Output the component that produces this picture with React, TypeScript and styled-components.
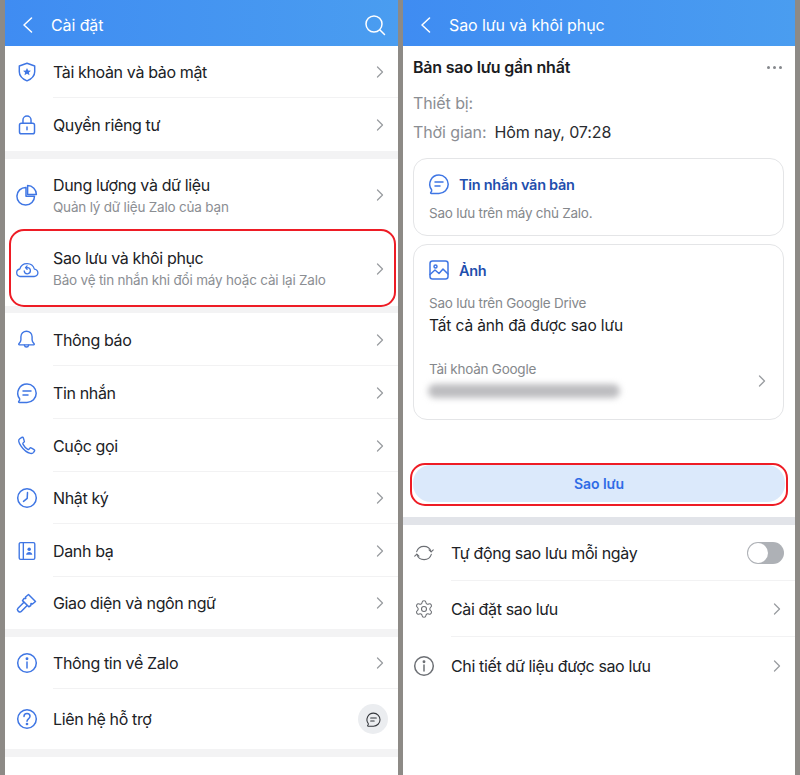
import React from "react";
import styled, { createGlobalStyle } from "styled-components";
import { Settings } from "lucide-react";

const Global = createGlobalStyle`
  html, body { margin: 0; padding: 0; background: #8d8a86; }
  * { box-sizing: border-box; }
`;

const Page = styled.div`
  width: 800px;
  height: 775px;
  overflow: hidden;
  padding: 0 5px;
  display: grid;
  grid-template-columns: 393px 392px;
  column-gap: 5px;
  background: #8d8a86;
  font-family: Inter, "Noto Sans", sans-serif;
  color: #1f2124;
`;

const Panel = styled.div`
  height: 775px;
  background: #fff;
  display: flex;
  flex-direction: column;
  overflow: hidden;
`;

const Header = styled.div`
  flex: none;
  height: 46px;
  display: flex;
  align-items: center;
  padding: 4px 12px 0 17px;
  background: linear-gradient(90deg, #3f8cf2 0%, #4a9df0 100%);
  color: #fff;
  font-size: 16px;
  gap: 18px;
`;

const HeaderTitle = styled.div<{ $grow?: boolean }>`
  flex: ${(p) => (p.$grow ? 1 : "none")};
  letter-spacing: -0.1px;
`;

const Band = styled.div<{ $h: number; $color?: string }>`
  flex: none;
  height: ${(p) => p.$h}px;
  background: ${(p) => p.$color ?? "#f3f3f4"};
`;

const Row = styled.div<{ $h: number; $inset?: number; $line?: boolean }>`
  position: relative;
  flex: none;
  height: ${(p) => p.$h}px;
  display: flex;
  align-items: center;
  padding-left: ${(p) => p.$inset ?? 12}px;
  padding-right: 14px;
  ${(p) =>
    p.$line
      ? `&::after { content: ""; position: absolute; left: 48px; right: 0; bottom: 0; height: 1px; background: #f2f2f3; }`
      : ""}
`;

const IconSlot = styled.div<{ $w?: number; $color?: string }>`
  flex: none;
  width: ${(p) => p.$w ?? 36}px;
  height: 24px;
  padding-right: ${(p) => (p.$w ?? 36) - 19}px;
  display: flex;
  align-items: center;
  justify-content: center;
  color: ${(p) => p.$color ?? "#3f76e4"};
  & > svg {
    flex: none;
  }
`;

const Labels = styled.div`
  flex: 1;
  min-width: 0;
  display: flex;
  flex-direction: column;
`;

const Label = styled.div`
  font-size: 16px;
  line-height: 22px;
  letter-spacing: -0.36px;
  color: #202226;
  white-space: nowrap;
`;

const SubLabel = styled.div`
  font-size: 13.5px;
  line-height: 19px;
  letter-spacing: -0.2px;
  margin-top: 2px;
  color: #8b8e93;
  white-space: nowrap;
`;

const Highlight = styled.div`
  position: absolute;
  border: 2px solid #ee1c25;
  pointer-events: none;
`;

const RowHighlight = styled(Highlight)`
  left: 4px;
  right: 2px;
  top: -2px;
  bottom: -1px;
  border-radius: 15px;
`;

const ChatBubble = styled.div`
  flex: none;
  width: 30px;
  height: 30px;
  margin-right: -4px;
  border-radius: 50%;
  background: #ebedf0;
  display: flex;
  align-items: center;
  justify-content: center;
  color: #33363b;
`;

const TitleRow = styled.div`
  flex: none;
  display: flex;
  align-items: center;
  justify-content: space-between;
  padding: 0 13px 0 10px;
  height: 42px;
`;

const SectionTitle = styled.div`
  font-size: 16px;
  font-weight: 600;
  letter-spacing: -0.2px;
  color: #1b1c1f;
`;

const Dots = styled.div`
  display: flex;
  gap: 3px;
  & > span {
    width: 3px;
    height: 3px;
    border-radius: 50%;
    background: #85888c;
  }
`;

const MetaRow = styled.div`
  flex: none;
  height: 29px;
  display: flex;
  align-items: center;
  gap: 8px;
  padding-left: 10px;
  font-size: 16px;
  letter-spacing: -0.1px;
`;

const MetaKey = styled.span`
  color: #8b8e93;
`;

const MetaValue = styled.span`
  color: #2a2c30;
`;

const Cards = styled.div`
  flex: none;
  display: flex;
  flex-direction: column;
  gap: 8px;
  margin: 12px 11px 0 10px;
`;

const Card = styled.div<{ $h: number }>`
  height: ${(p) => p.$h}px;
  border: 1px solid #e4e5e7;
  border-radius: 14px;
  padding: 0 15px;
  display: flex;
  flex-direction: column;
`;

const CardHead = styled.div`
  display: flex;
  align-items: center;
  gap: 8px;
  height: 22px;
  margin: 14px 0 0 -2px;
  color: #3f76e4;
  & > svg {
    flex: none;
  }
`;

const CardTitle = styled.div`
  font-size: 14.5px;
  font-weight: 600;
  letter-spacing: -0.28px;
  color: #1f4fae;
`;

const CardNote = styled.div<{ $top?: number }>`
  font-size: 13.5px;
  line-height: 18px;
  letter-spacing: -0.25px;
  color: #85888c;
  margin-top: ${(p) => p.$top ?? 0}px;
`;

const CardStrong = styled.div`
  font-size: 15.5px;
  line-height: 22px;
  letter-spacing: -0.12px;
  color: #1b1c1f;
  margin-top: 3px;
`;

const AccountRow = styled.div`
  display: flex;
  align-items: center;
  justify-content: space-between;
  margin-top: 23px;
  padding-right: 2px;
`;

const BlurredEmail = styled.div`
  width: 192px;
  height: 14px;
  margin: 6px 0 0 -1px;
  border-radius: 7px;
  background: #bdbdc0;
  filter: blur(3px);
`;

const AccountText = styled.div`
  display: flex;
  flex-direction: column;
`;

const AccountChevron = styled.div`
  display: flex;
  margin-top: 4px;
`;

const ButtonWrap = styled.div`
  position: relative;
  flex: none;
  margin: 45px 10px 15px 10px;
`;

const PrimaryButton = styled.div`
  height: 37px;
  border-radius: 18px;
  background: #dbe9fb;
  color: #2f6ce6;
  font-size: 14px;
  font-weight: 600;
  letter-spacing: -0.1px;
  display: flex;
  align-items: center;
  justify-content: center;
`;

const ButtonHighlight = styled(Highlight)`
  left: -3px;
  right: -3px;
  top: -2px;
  bottom: -4px;
  border-radius: 15px;
`;

const Toggle = styled.div`
  flex: none;
  width: 37px;
  height: 22px;
  border-radius: 11px;
  background: #aeb1b6;
  padding: 1px;
  margin-right: -3px;
  display: flex;
  & > span {
    width: 20px;
    height: 20px;
    border-radius: 50%;
    background: #fff;
  }
`;

const Svg = ({ size = 24, sw = 1.6, children }: { size?: number; sw?: number; children: React.ReactNode }) => (
  <svg width={size} height={size} viewBox="0 0 24 24" fill="none" stroke="currentColor" strokeWidth={sw} strokeLinecap="round" strokeLinejoin="round">
    {children}
  </svg>
);

const Chevron = () => (
  <svg width="8" height="12" viewBox="0 0 8 12" fill="none" stroke="#9a9da1" strokeWidth="1.3" strokeLinecap="round" strokeLinejoin="round">
    <path d="M1.500 1 6.500 6 1.500 11" />
  </svg>
);

const Shield = () => (
  <Svg size={22}>
    <path d="M12 2.500 3.600 5.400v6.200c0 4.600 3.800 8 8.400 10 4.600-2 8.400-5.400 8.400-10V5.400L12 2.500Z" />
    <path d="m12 7.600 1.300 2.700 3 .3-2.200 2 .6 2.900-2.700-1.500-2.700 1.500.6-2.900-2.200-2 3-.3L12 7.600Z" fill="currentColor" stroke="none" />
  </Svg>
);
const Lock = () => (
  <Svg size={22}>
    <rect x="3.800" y="10" width="16.400" height="11.500" rx="2" />
    <path d="M7.600 10V6.600a4.400 4.400 0 0 1 8.800 0V10M12 14.200v3" />
  </Svg>
);
const Pie = () => (
  <Svg size={24} sw={1.5}>
    <path d="M11 4.500A8.800 8.800 0 1 0 19.500 13.200H11V4.500Z" />
    <path d="M12.600 2.600A8.800 8.800 0 0 1 21.400 11.400H12.600V2.600Z" />
  </Svg>
);
const CloudSync = () => (
  <svg width="24" height="18" viewBox="0 0 24 18" fill="none" stroke="currentColor" strokeWidth="1.3" strokeLinecap="round" strokeLinejoin="round">
    <path d="M5 16.500H19A3.700 3.700 0 0 0 19.400 9.100 7.600 7.600 0 0 0 4.800 9 3.800 3.800 0 0 0 5 16.500Z" />
    <path d="M9.200 10.800A3.100 3.100 0 1 0 12.200 7.600H10.800M12.100 5.900 10.500 7.600 12.100 9.200" />
  </svg>
);
const Bell = () => (
  <Svg size={21}>
    <path d="M12 2.500a6.400 6.400 0 0 0-6.400 6.400v3.600c0 1.400-1 3-2.300 4.400-.4.500-.1 1.200.5 1.200h16.400c.6 0 .9-.7.5-1.200-1.300-1.400-2.300-3-2.300-4.400V8.900A6.400 6.400 0 0 0 12 2.500Z" />
    <path d="M9.600 18.400c.2 1.300 1.200 2.200 2.400 2.200s2.200-.9 2.400-2.200" />
  </Svg>
);
const Message = ({ size = 24 }: { size?: number }) => (
  <Svg size={size} sw={1.5}>
    <path d="M12 3a9.200 9.200 0 0 1 0 18.400H4.400c-.8 0-1-.7-.5-1.200.8-.8 1-1.600.7-2.500A9.200 9.200 0 0 1 12 3Z" />
    <path d="M8 10h8M8 14h5" />
  </Svg>
);
const Phone = () => (
  <Svg size={21}>
    <path d="M6.600 2.800 4 4.600C2.800 5.500 3.100 8.800 5.800 12.800c2.900 4.300 6.900 7.500 10.700 8.200 1.600.3 2.800-.1 3.600-1.200l1-1.500c.4-.6.200-1.300-.4-1.600l-3.400-1.900c-.5-.3-1.100-.2-1.500.3l-.9 1.100c-.4.400-1 .5-1.500.2-2.300-1.400-4.200-3.500-5.500-6-.2-.5-.1-1 .3-1.400l1-.9c.4-.4.500-1 .2-1.500L8.300 3.200c-.3-.6-1.100-.8-1.700-.4Z" />
  </Svg>
);
const Clock = () => (
  <Svg size={24} sw={1.5}>
    <circle cx="12" cy="12" r="9.300" />
    <path d="M12.500 6.600 12.200 12.400 8.500 15.400" />
  </Svg>
);
const Contacts = () => (
  <Svg size={22} sw={1.5}>
    <rect x="3.500" y="2.800" width="17" height="18.400" rx="1.500" />
    <path d="M8 2.800v18.400" />
    <circle cx="14.400" cy="10" r="1.900" fill="currentColor" stroke="none" />
    <path d="M11 16c.3-2 1.700-3 3.400-3s3.100 1 3.400 3H11Z" fill="currentColor" stroke="none" />
  </Svg>
);
const Brush = () => (
  <Svg size={24} sw={1.5}>
    <path d="m13.500 3.500 7 7-3 2.500-1.500-.5-.2 2-2 1.300L7.500 9.600l1.400-2 1.900-.2-.3-1.400 3-2.500Z" />
    <path d="M8.700 11.500 3 17.200c-.8.800-.8 1.700-.2 2.400l1 1c.7.700 1.700.6 2.400-.1l5.700-5.700" />
  </Svg>
);
const Info = () => (
  <Svg size={24} sw={1.5}>
    <circle cx="12" cy="12" r="9.300" />
    <path d="M12 11v6" />
    <circle cx="12" cy="7.700" r=".7" fill="currentColor" />
  </Svg>
);
const Help = () => (
  <Svg size={24} sw={1.5}>
    <circle cx="12" cy="12" r="9.300" />
    <path d="M9 9.500c0-1.800 1.300-3 3-3s3 1.100 3 2.800c0 2.500-3 2.500-3 4.900" />
    <circle cx="12" cy="17" r=".6" fill="currentColor" />
  </Svg>
);
const Sync = () => (
  <Svg size={22} sw={1.2}>
    <path d="M4 10.500A8.300 8.300 0 0 1 19.800 10.500" />
    <path d="M17.500 8.500l2.300 2.300 2.300-2.300" />
    <path d="M20 13.500A8.300 8.300 0 0 1 4.200 13.500" />
    <path d="M1.900 15.500l2.300-2.300 2.300 2.300" />
  </Svg>
);
const Picture = () => (
  <Svg size={24} sw={1.5}>
    <rect x="3" y="3" width="18" height="18" rx="2.500" />
    <circle cx="8.500" cy="8.500" r="1.500" />
    <path d="m3 16.500 5-4.500 4 3.500 4-4.500 5 5" />
  </Svg>
);
const Swap = () => (
  <Svg size={22}>
    <circle cx="12" cy="7.500" r="4.500" />
    <path d="M4 21c.6-4.500 3.800-6.500 8-6.500s7.400 2 8 6.500" />
  </Svg>
);
const Search = () => (
  <svg width="22" height="22" viewBox="0 0 22 22" fill="none" stroke="#fff" strokeWidth="1.500" strokeLinecap="round">
    <circle cx="10" cy="10" r="8" />
    <path d="m16 16 4.500 4.500" />
  </svg>
);
const Back = () => (
  <svg width="11" height="16" viewBox="0 0 11 16" fill="none" stroke="#fff" strokeWidth="1.500" strokeLinecap="round" strokeLinejoin="round">
    <path d="M9.500 1 2 8l7.500 7" />
  </svg>
);

type Item = { icon: React.ReactNode; label: string; sub?: string; h: number; line?: boolean; hl?: boolean };

const group1: Item[] = [
  { icon: <Shield />, label: "Tài khoản và bảo mật", h: 52, line: true },
  { icon: <Lock />, label: "Quyền riêng tư", h: 53 },
];
const group2: Item[] = [
  { icon: <Pie />, label: "Dung lượng và dữ liệu", sub: "Quản lý dữ liệu Zalo của bạn", h: 72 },
  { icon: <CloudSync />, label: "Sao lưu và khôi phục", sub: "Bảo vệ tin nhắn khi đổi máy hoặc cài lại Zalo", h: 75, hl: true },
];
const group3: Item[] = [
  { icon: <Bell />, label: "Thông báo", h: 53, line: true },
  { icon: <Message />, label: "Tin nhắn", h: 53, line: true },
  { icon: <Phone />, label: "Cuộc gọi", h: 53, line: true },
  { icon: <Clock />, label: "Nhật ký", h: 52, line: true },
  { icon: <Contacts />, label: "Danh bạ", h: 53, line: true },
  { icon: <Brush />, label: "Giao diện và ngôn ngữ", h: 52 },
];

const SettingRow = ({ item }: { item: Item }) => (
  <Row $h={item.h} $line={item.line}>
    <IconSlot>{item.icon}</IconSlot>
    <Labels>
      <Label>{item.label}</Label>
      {item.sub && <SubLabel>{item.sub}</SubLabel>}
    </Labels>
    <Chevron />
    {item.hl && <RowHighlight />}
  </Row>
);

export default function App() {
  return (
    <>
      <Global />
      <Page>
        <Panel>
          <Header>
            <Back />
            <HeaderTitle $grow>Cài đặt</HeaderTitle>
            <Search />
          </Header>
          {group1.map((i) => <SettingRow key={i.label} item={i} />)}
          <Band $h={8} />
          {group2.map((i) => <SettingRow key={i.label} item={i} />)}
          <Band $h={7} />
          {group3.map((i) => <SettingRow key={i.label} item={i} />)}
          <Band $h={8} />
          <SettingRow item={{ icon: <Info />, label: "Thông tin về Zalo", h: 52, line: true }} />
          <Row $h={60}>
            <IconSlot><Help /></IconSlot>
            <Labels><Label>Liên hệ hỗ trợ</Label></Labels>
            <ChatBubble><Message size={17} /></ChatBubble>
          </Row>
          <Band $h={8} />
          <SettingRow item={{ icon: <Swap />, label: "Chuyển tài khoản", h: 53 }} />
        </Panel>

        <Panel>
          <Header>
            <Back />
            <HeaderTitle>Sao lưu và khôi phục</HeaderTitle>
          </Header>
          <TitleRow>
            <SectionTitle>Bản sao lưu gần nhất</SectionTitle>
            <Dots><span /><span /><span /></Dots>
          </TitleRow>
          <MetaRow><MetaKey>Thiết bị:</MetaKey></MetaRow>
          <MetaRow><MetaKey>Thời gian:</MetaKey><MetaValue>Hôm nay, 07:28</MetaValue></MetaRow>
          <Cards>
            <Card $h={78}>
              <CardHead>
                <Message />
                <CardTitle>Tin nhắn văn bản</CardTitle>
              </CardHead>
              <CardNote $top={9}>Sao lưu trên máy chủ Zalo.</CardNote>
            </Card>
            <Card $h={176}>
              <CardHead>
                <Picture />
                <CardTitle>Ảnh</CardTitle>
              </CardHead>
              <CardNote $top={13}>Sao lưu trên Google Drive</CardNote>
              <CardStrong>Tất cả ảnh đã được sao lưu</CardStrong>
              <AccountRow>
                <AccountText>
                  <CardNote>Tài khoản Google</CardNote>
                  <BlurredEmail />
                </AccountText>
                <AccountChevron><Chevron /></AccountChevron>
              </AccountRow>
            </Card>
          </Cards>
          <ButtonWrap>
            <PrimaryButton>Sao lưu</PrimaryButton>
            <ButtonHighlight />
          </ButtonWrap>
          <Band $h={8} $color="#e2e4e9" />
          <Row $h={56} $inset={11} $line>
            <IconSlot $w={37} $color="#6d7075"><Sync /></IconSlot>
            <Labels><Label>Tự động sao lưu mỗi ngày</Label></Labels>
            <Toggle><span /></Toggle>
          </Row>
          <Row $h={56} $inset={11} $line>
            <IconSlot $w={37} $color="#6d7075"><Settings size={20} strokeWidth={1.3} /></IconSlot>
            <Labels><Label>Cài đặt sao lưu</Label></Labels>
            <Chevron />
          </Row>
          <Row $h={57} $inset={11}>
            <IconSlot $w={37} $color="#6d7075"><Info /></IconSlot>
            <Labels><Label>Chi tiết dữ liệu được sao lưu</Label></Labels>
            <Chevron />
          </Row>
        </Panel>
      </Page>
    </>
  );
}
